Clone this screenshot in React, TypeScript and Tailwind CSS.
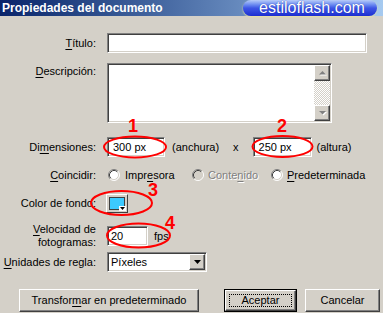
import React from "react";

const sunken =
  "border border-t-[#808080] border-l-[#808080] border-b-white border-r-white shadow-[inset_1px_1px_0_#404040,inset_-1px_-1px_0_#d4d0c8] bg-white";
const raised =
  "border border-t-white border-l-white border-b-[#404040] border-r-[#404040] shadow-[inset_-1px_-1px_0_#808080,inset_1px_1px_0_#d4d0c8] bg-[#d4d0c8]";

function Radio({ disabled }: { disabled?: boolean }) {
  return (
    <svg width="12" height="12" viewBox="0 0 12 12" className="shrink-0">
      <circle cx="6" cy="6" r="5" fill={disabled ? "#d4d0c8" : "#ffffff"} />
      <path d="M2.11 9.89 A5.5 5.5 0 0 1 9.89 2.11" stroke="#808080" fill="none" />
      <path d="M9.89 2.11 A5.5 5.5 0 0 1 2.11 9.89" stroke="#ffffff" fill="none" />
      <path d="M2.82 9.18 A4.5 4.5 0 0 1 9.18 2.82" stroke="#404040" fill="none" />
      <path d="M9.18 2.82 A4.5 4.5 0 0 1 2.82 9.18" stroke="#d4d0c8" fill="none" />
    </svg>
  );
}

function U({ children }: { children: React.ReactNode }) {
  return <span className="underline underline-offset-[2px]">{children}</span>;
}

function Label({ children, className = "" }: { children: React.ReactNode; className?: string }) {
  return <div className={"w-[96px] shrink-0 text-right " + className}>{children}</div>;
}

function ArrowBtn({ down }: { down?: boolean }) {
  return (
    <div className={"w-4 h-4 flex items-center justify-center " + raised}>
      <svg width="9" height="6" viewBox="0 0 9 6">
        {down ? (
          <>
            <path d="M1 1 H8 L4.5 4.5 Z" fill="#ffffff" transform="translate(1,1)" />
            <path d="M1 1 H8 L4.5 4.5 Z" fill="#808080" />
          </>
        ) : (
          <>
            <path d="M1 4.5 H8 L4.5 1 Z" fill="#ffffff" transform="translate(1,1)" />
            <path d="M1 4.5 H8 L4.5 1 Z" fill="#808080" />
          </>
        )}
      </svg>
    </div>
  );
}

export default function App() {
  return (
    <div className="w-[383px] h-[313px] bg-[#d4d0c8] relative overflow-hidden font-['Liberation_Sans',Arial,sans-serif] text-[11px] leading-[13px] text-black">
      {/* Title bar */}
      <div className="h-4 flex items-center justify-between bg-gradient-to-r from-[#0a246a] to-[#a6caf0] pl-[2px] pr-[6px]">
        <span className="text-white font-bold text-[12px] leading-4">Propiedades del documento</span>
        <div className="h-[16px] w-[134px] rounded-full bg-gradient-to-b from-[#b8ccf8] via-[#3f56e6] to-[#1c2cd0] shadow-[0_1px_2px_#e8e0a0] flex items-center justify-center">
          <span className="text-white text-[16px] leading-4 pl-[4px] [text-shadow:0_0_1px_#1020a0]">estiloflash.com</span>
        </div>
      </div>

      <div className="flex flex-col">
        {/* Título */}
        <div className="flex items-center mt-[17px] h-5">
          <Label>
            <U>T</U>ítulo:
          </Label>
          <div className={"ml-[11px] w-[260px] h-5 " + sunken} />
        </div>

        {/* Descripción */}
        <div className="flex items-start mt-[10px]">
          <Label className="pt-[2px]">
            <U>D</U>escripción:
          </Label>
          <div className={"ml-[11px] w-[225px] h-[60px] flex justify-end p-[1px] " + sunken}>
            <div className="flex flex-col w-4 h-full">
              <ArrowBtn />
              <div className="flex-1 bg-[repeating-conic-gradient(#ffffff_0_25%,#d4d0c8_0_50%)] bg-[length:2px_2px]" />
              <ArrowBtn down />
            </div>
          </div>
        </div>

        {/* Dimensiones */}
        <div className="flex items-center mt-[14px] h-5">
          <Label>
            Di<U>m</U>ensiones:
          </Label>
          <div className={"ml-[11px] w-[58px] h-5 flex items-center pl-[5px] " + sunken}>300 px</div>
          <span className="ml-[7px]">(anchura)</span>
          <span className="ml-[14px]">x</span>
          <div className={"ml-[14px] w-[59px] h-5 flex items-center pl-[5px] " + sunken}>250 px</div>
          <span className="ml-[5px]">(altura)</span>
        </div>

        {/* Coincidir */}
        <div className="flex items-center mt-[10px] h-4">
          <Label>
            <U>C</U>oincidir:
          </Label>
          <div className="ml-[12px] w-[84px] flex items-center gap-[5px]">
            <Radio />
            <span>
              Impr<U>e</U>sora
            </span>
          </div>
          <div className="w-[79px] flex items-center gap-[4px]">
            <Radio disabled />
            <span className="text-[#808080] [text-shadow:1px_1px_0_#ffffff]">
              Conte<U>n</U>ido
            </span>
          </div>
          <div className="flex items-center gap-[4px]">
            <Radio />
            <span>
              <U>P</U>redeterminada
            </span>
          </div>
        </div>

        {/* Color de fondo */}
        <div className="flex items-center mt-[10px] h-[20px]">
          <Label>Color de fondo:</Label>
          <div className="ml-[10px] w-[22px] h-[19px] relative border border-t-white border-l-white border-b-[#404040] border-r-[#404040] bg-[#d4d0c8] p-[2px]">
            <div className="w-full h-full bg-[#3ccaff] border border-[#404040]" />
            <div className="absolute right-[1px] bottom-[1px] w-[7px] h-[5px] bg-white flex items-center justify-center">
              <svg width="5" height="3" viewBox="0 0 5 3">
                <path d="M0 0 H5 L2.5 3 Z" fill="#000" />
              </svg>
            </div>
          </div>
        </div>

        {/* Velocidad */}
        <div className="flex items-center mt-[10px] h-[26px]">
          <Label>
            <U>V</U>elocidad de
            <br />
            fotogramas:
          </Label>
          <div className={"ml-[11px] w-[41px] h-5 flex items-center pl-[3px] " + sunken}>20</div>
          <span className="ml-[6px]">fps</span>
        </div>

        {/* Unidades */}
        <div className="flex items-center mt-[3px] h-5">
          <Label>
            <U>U</U>nidades de regla:
          </Label>
          <div className={"ml-[11px] w-[100px] h-5 flex items-center justify-between p-[1px] " + sunken}>
            <span className="pl-[2px]">Píxeles</span>
            <div className={"w-4 h-4 flex items-center justify-center " + raised}>
              <svg width="7" height="4" viewBox="0 0 7 4">
                <path d="M0 0 H7 L3.5 4 Z" fill="#000" />
              </svg>
            </div>
          </div>
        </div>

        {/* Buttons */}
        <div className="flex items-center mt-[17px] pl-[19px] h-[23px]">
          <div className={"w-[180px] h-[23px] flex items-center justify-center " + raised}>
            Transfor<U>m</U>ar en predeterminado
          </div>
          <div className="ml-[25px] w-[73px] h-[23px] border border-black">
            <div className={"w-full h-full flex items-center justify-center p-[3px] " + raised}>
              <div className="w-full h-full border border-dotted border-black flex items-center justify-center">
                Aceptar
              </div>
            </div>
          </div>
          <div className={"ml-[8px] w-[75px] h-[23px] flex items-center justify-center " + raised}>
            Cancelar
          </div>
        </div>
      </div>

      {/* Red annotations */}
      <svg className="absolute inset-0 pointer-events-none" width="383" height="313" viewBox="0 0 383 313">
        <g fill="none" stroke="#ff0000" strokeWidth="2">
          <ellipse cx="135" cy="147" rx="31" ry="10.5" />
          <ellipse cx="282.5" cy="146.5" rx="30" ry="10.5" />
          <ellipse cx="121.5" cy="203" rx="30.5" ry="12" />
          <ellipse cx="138.5" cy="235.5" rx="31.5" ry="12" />
        </g>
      </svg>
      <span className="absolute left-[128px] top-[117px] text-[#ff0000] font-bold text-[18px] leading-[18px]">1</span>
      <span className="absolute left-[277px] top-[117px] text-[#ff0000] font-bold text-[18px] leading-[18px]">2</span>
      <span className="absolute left-[148px] top-[181px] text-[#ff0000] font-bold text-[18px] leading-[18px]">3</span>
      <span className="absolute left-[165px] top-[214px] text-[#ff0000] font-bold text-[18px] leading-[18px]">4</span>
    </div>
  );
}
